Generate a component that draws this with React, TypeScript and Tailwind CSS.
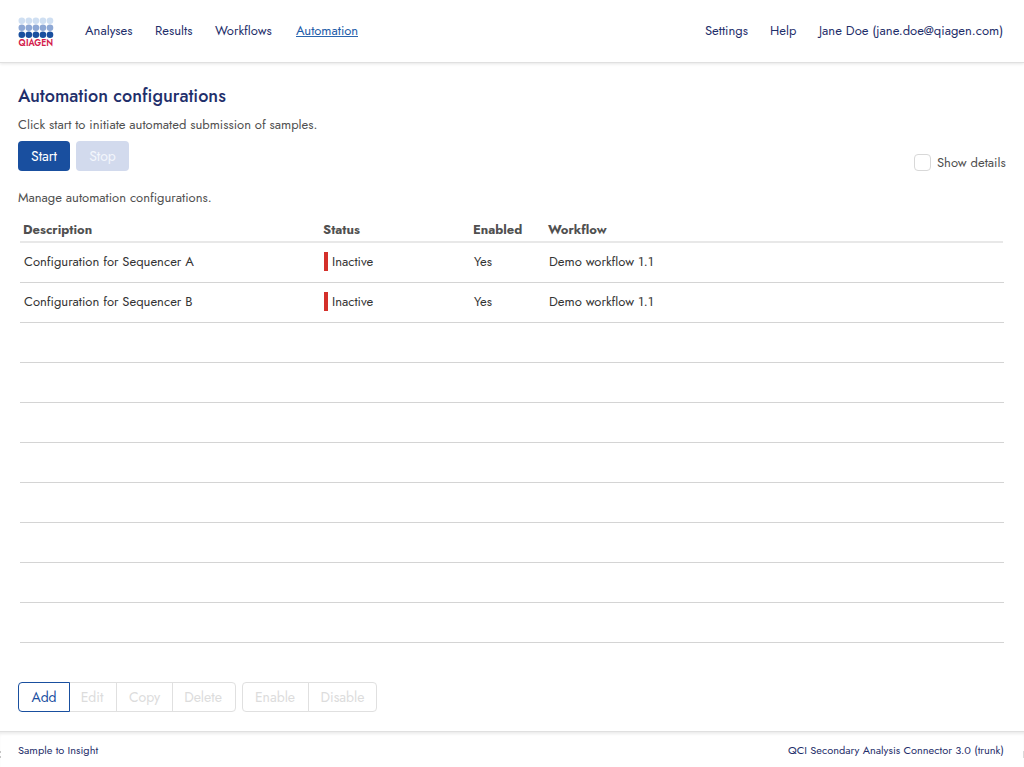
import clsx from "clsx";

const COLUMNS = ["Description", "Status", "Enabled", "Workflow"];

const CONFIGURATIONS = [
  { name: "Configuration for Sequencer A", status: "Inactive", enabled: "Yes", workflow: "Demo workflow 1.1" },
  { name: "Configuration for Sequencer B", status: "Inactive", enabled: "Yes", workflow: "Demo workflow 1.1" },
];

const EMPTY_ROWS = 8;

const GRID = "grid grid-cols-[300px_150px_75px_1fr]";

export default function App() {
  return (
    <div className="flex h-[767px] w-[1024px] flex-col overflow-hidden bg-white font-['Jost','Lato',sans-serif] text-[13px] leading-5 text-[#505050]">
      <Header />
      <main className="flex h-[669px] flex-col">
        <h1 className="mt-[20px] ml-[18px] h-[28px] w-fit text-[18px] leading-[28px] font-medium text-[#1f2f6b]">
          Automation configurations
        </h1>
        <p className="mt-[5px] ml-[18px] w-fit whitespace-nowrap">Click start to initiate automated submission of samples.</p>
        <div className="mt-[6px] flex h-[30px] pr-[18px] pl-[18px]">
          <button className="h-[30px] w-[52px] rounded bg-[#194f9f] text-[14px] text-white">Start</button>
          <button className="ml-[6px] h-[30px] w-[53px] rounded bg-[#d2daed] text-[14px] text-[#f3f6fc]">Stop</button>
          <label className="mt-[13px] ml-auto flex h-[17px] items-center gap-[6px]">
            <span className="size-[17px] rounded border border-[#d8d8d8] bg-white" />
            <span className="w-[69px] whitespace-nowrap">Show details</span>
          </label>
        </div>
        <p className="mt-[17px] ml-[18px] w-fit">Manage automation configurations.</p>
        <Table />
        <div className="mt-[39px] ml-[18px] flex text-[14px]">
          <div className="flex">
            <ToolButton label="Add" className="z-10 w-[52px] rounded-l border-[#194f9f] text-[#194f9f]" />
            <ToolButton label="Edit" className="-ml-px w-[48px] border-[#e0e0e0] pr-[2px] text-[#dcdcdc]" />
            <ToolButton label="Copy" className="-ml-px w-[57px] border-[#e0e0e0] text-[#dcdcdc]" />
            <ToolButton label="Delete" className="-ml-px w-[64px] rounded-r border-[#e0e0e0] pr-[2px] text-[#dcdcdc]" />
          </div>
          <div className="ml-[6px] flex">
            <ToolButton label="Enable" className="w-[67px] rounded-l border-[#e0e0e0] pr-[1px] text-[#dcdcdc]" />
            <ToolButton label="Disable" className="-ml-px w-[69px] rounded-r border-[#e0e0e0] text-[#dcdcdc]" />
          </div>
        </div>
      </main>
      <Footer />
    </div>
  );
}

function Header() {
  return (
    <header className="flex h-[62px] shrink-0 pr-[21px] pl-[18px] text-[#1f2f6b] shadow-[0_1px_0_#e0e0e0,0_2px_3px_rgba(0,0,0,0.1)]">
      <Logo />
      <nav className="mt-[21px] ml-[31px] flex whitespace-nowrap">
        <a className="w-[70px]">Analyses</a>
        <a className="w-[60px]">Results</a>
        <a className="w-[81px]">Workflows</a>
        <a className="h-[16px] w-[62px] border-b border-[#2b66ae] text-[#1d5ba8]">Automation</a>
      </nav>
      <nav className="mt-[21px] ml-auto flex whitespace-nowrap">
        <a className="w-[65px]">Settings</a>
        <a className="w-[49px]">Help</a>
        <a className="w-[184px]">Jane Doe (jane.doe@qiagen.com)</a>
      </nav>
    </header>
  );
}

function Logo() {
  return (
    <svg className="mt-[16px] h-[34px] w-[36px] overflow-visible" viewBox="0 0 36 34">
      {["#cfdff2", "#8ea8d5", "#194f9f"].map((fill, row) =>
        [0, 1, 2, 3, 4].map((col) => (
          <circle key={`${row}-${col}`} cx={3.8 + col * 7.05} cy={4.8 + row * 7} r="3.3" fill={fill} />
        )),
      )}
      <text x="0.6" y="30" textLength="34.6" lengthAdjust="spacingAndGlyphs" fontSize="9.8" fontWeight="600" fill="#d3204b">
        QIAGEN
      </text>
    </svg>
  );
}

function Table() {
  return (
    <div className="mt-[10px] ml-[20px] w-[984px]">
      <div className={clsx(GRID, "h-[25px] w-[983px] border-b-2 border-[#e8e8e8] pl-[3px] leading-6 font-bold")}>
        {COLUMNS.map((column) => (
          <span key={column}>{column}</span>
        ))}
      </div>
      {CONFIGURATIONS.map((config) => (
        <div key={config.name} className={clsx(GRID, "h-[40px] items-center border-b border-[#d4d4d4] pb-[2px] pl-[4px] text-[#343434]")}>
          <span>{config.name}</span>
          <span className="flex h-[19px] items-center border-l-4 border-[#d4302a] pl-1">{config.status}</span>
          <span>{config.enabled}</span>
          <span>{config.workflow}</span>
        </div>
      ))}
      {Array.from({ length: EMPTY_ROWS }, (_, i) => (
        <div key={i} className="h-[40px] border-b border-[#d4d4d4]" />
      ))}
    </div>
  );
}

function ToolButton({ label, className }: { label: string; className: string }) {
  return <button className={clsx("relative h-[30px] border", className)}>{label}</button>;
}

function Footer() {
  return (
    <footer className="relative flex h-[36px] items-start justify-between border-t border-[#e0e0e0] pt-[8px] pr-[21px] pl-[18px] text-[11px] text-[#1f2f6b] shadow-[inset_0_3px_3px_-1px_rgba(0,0,0,0.08)]">
      <span>Sample to Insight</span>
      <span className="w-[215px] whitespace-nowrap">QCI Secondary Analysis Connector 3.0 (trunk)</span>
      {/* slivers of grey showing at both window edges */}
      <span className="absolute top-[19px] left-0 h-[7px] w-px border-y-2 border-[#c4c4c4]" />
      <span className="absolute top-[19px] right-0 h-[7px] w-px bg-[#dadada]" />
    </footer>
  );
}
